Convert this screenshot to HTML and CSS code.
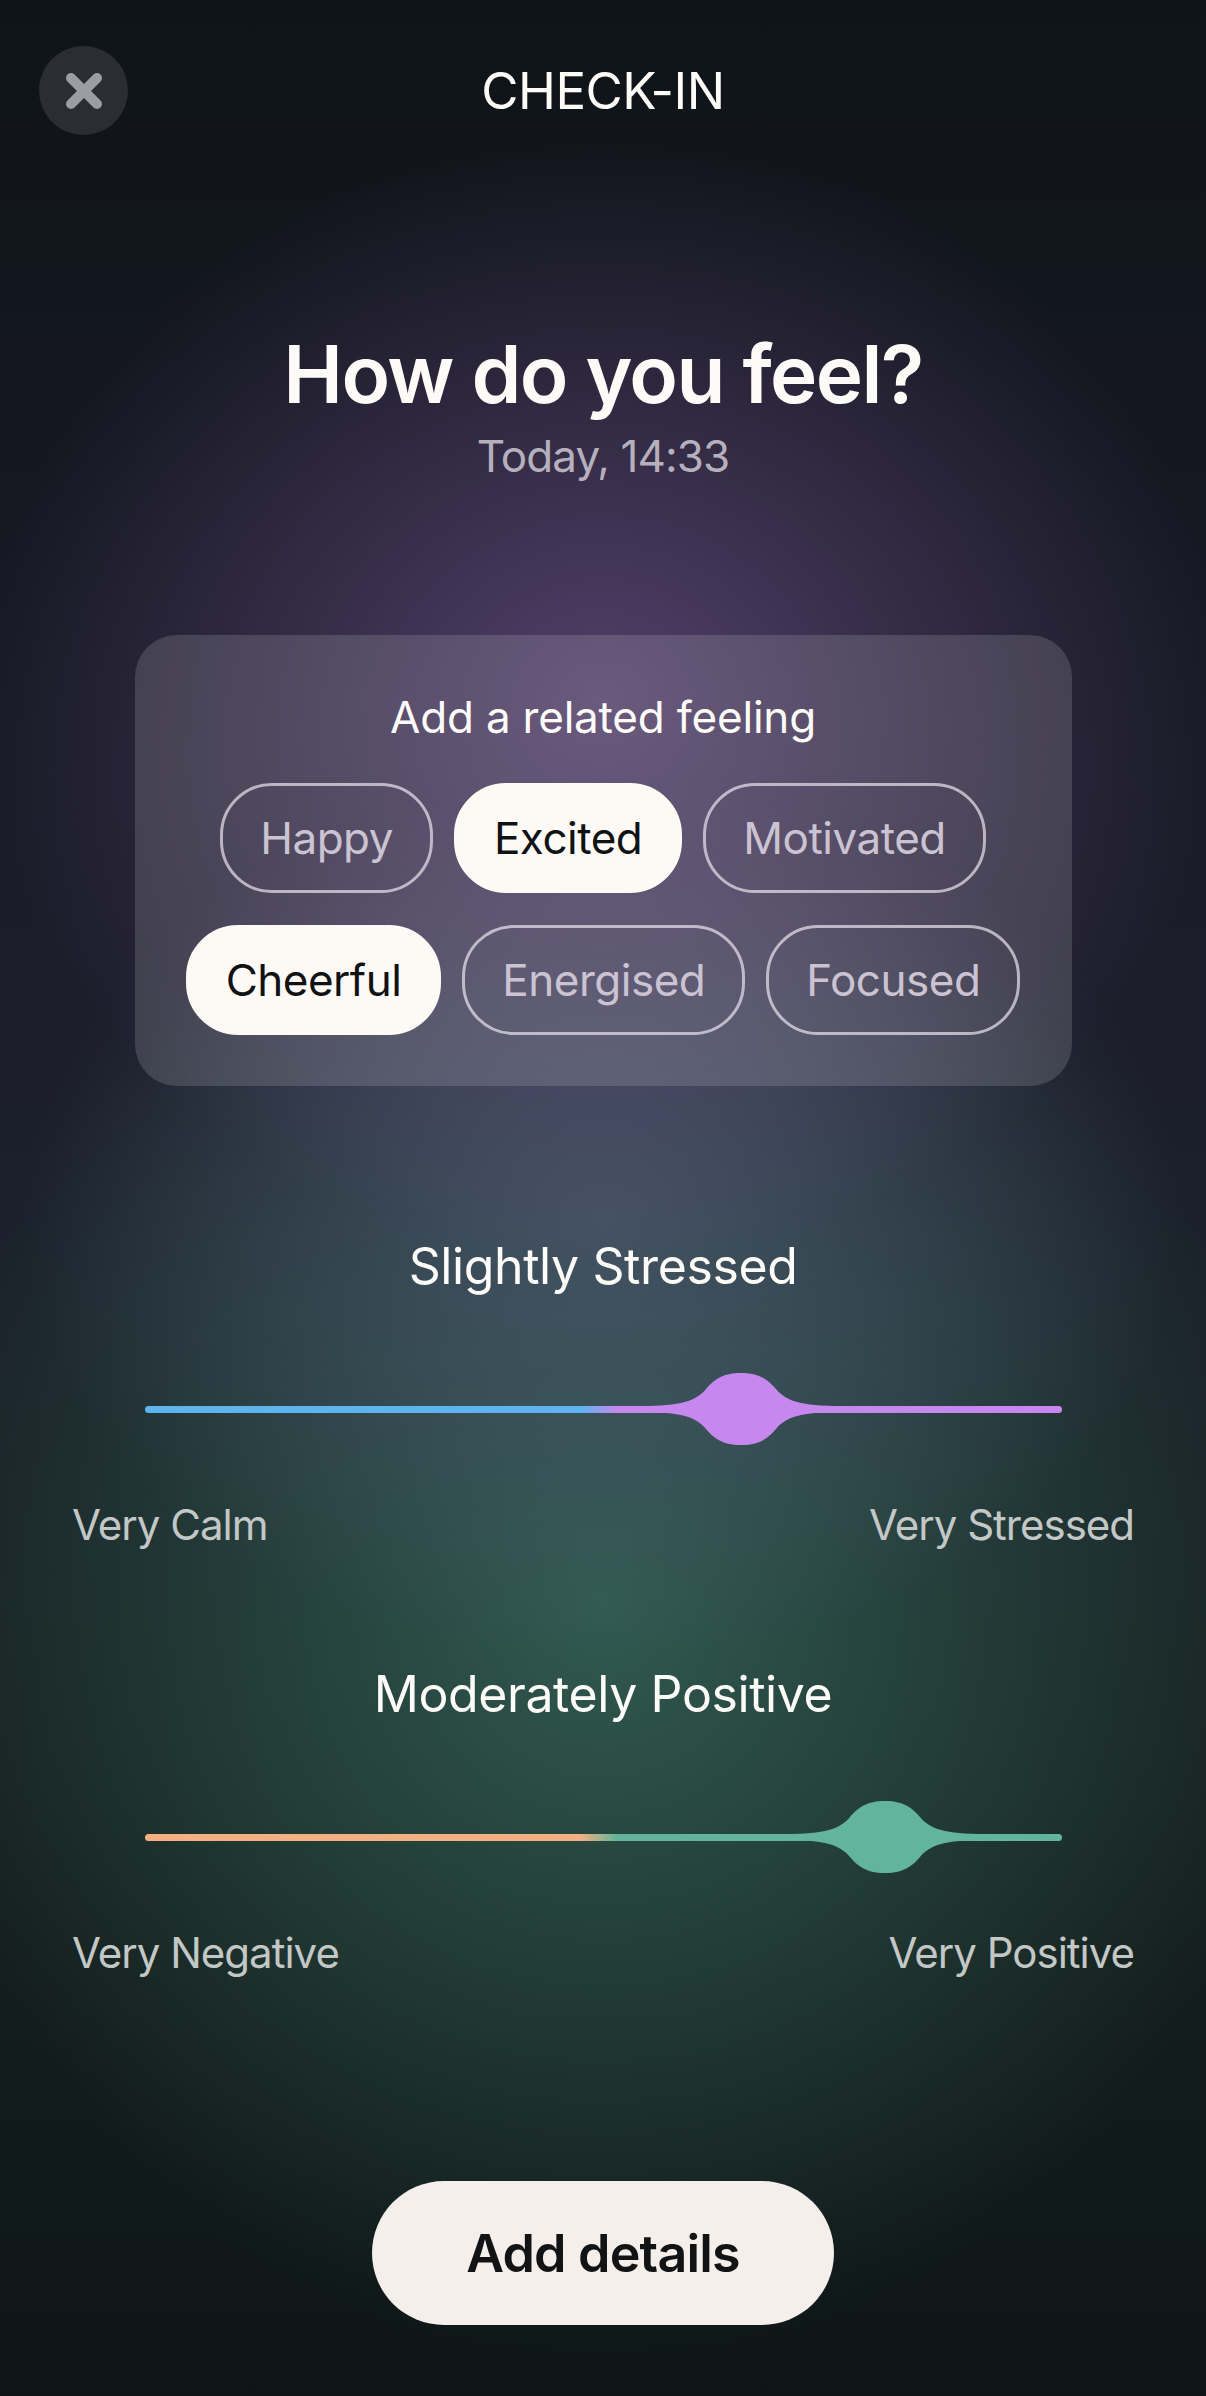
FILE: index.html
```html
<!DOCTYPE html>
<html lang="en">
<head>
<meta charset="utf-8">
<title>Check-in</title>
<link rel="stylesheet" href="styles.css">
</head>
<body>
<main class="screen">
  <header class="topbar">
    <button class="close" aria-label="Close">
      <svg width="36" height="36" viewBox="0 0 36 36"><path d="M5 5 L31 31 M31 5 L5 31" stroke="#9b9da4" stroke-width="10" stroke-linecap="round" fill="none"/></svg>
    </button>
    <div class="topbar-title">CHECK-IN</div>
    <div class="spacer"></div>
  </header>

  <h1 class="title">How do you feel?</h1>
  <p class="subtitle">Today, 14:33</p>

  <section class="card">
    <h2 class="card-title">Add a related feeling</h2>
    <div class="chips">
      <div class="chip-row">
        <span class="chip">Happy</span>
        <span class="chip chip-on">Excited</span>
        <span class="chip">Motivated</span>
      </div>
      <div class="chip-row">
        <span class="chip chip-on">Cheerful</span>
        <span class="chip">Energised</span>
        <span class="chip">Focused</span>
      </div>
    </div>
  </section>

  <section class="scale scale-first">
    <h3 class="scale-title">Slightly Stressed</h3>
    <div class="track-wrap">
      <div class="track track-stress"></div>
      <svg class="thumb" style="left: 65.1%" width="200" height="72" viewBox="0 0 200 72"><path fill="#c688ee" d="M0,33 C40,33 55,28 65,16 C72,8 80,0 100,0 C120,0 128,8 135,16 C145,28 160,33 200,33 L200,39 C160,39 145,44 135,56 C128,64 120,72 100,72 C80,72 72,64 65,56 C55,44 40,39 0,39 Z"/></svg>
    </div>
    <div class="scale-labels"><span>Very Calm</span><span>Very Stressed</span></div>
  </section>

  <section class="scale scale-second">
    <h3 class="scale-title">Moderately Positive</h3>
    <div class="track-wrap">
      <div class="track track-mood"></div>
      <svg class="thumb" style="left: 80.7%" width="200" height="72" viewBox="0 0 200 72"><path fill="#62b59a" d="M0,33 C40,33 55,28 65,16 C72,8 80,0 100,0 C120,0 128,8 135,16 C145,28 160,33 200,33 L200,39 C160,39 145,44 135,56 C128,64 120,72 100,72 C80,72 72,64 65,56 C55,44 40,39 0,39 Z"/></svg>
    </div>
    <div class="scale-labels"><span>Very Negative</span><span>Very Positive</span></div>
  </section>

  <button class="cta">Add details</button>
</main>
</body>
</html>
```
FILE: styles.css
```css
* { box-sizing: border-box; }

html, body {
  margin: 0;
  padding: 0;
}

body {
  width: 1206px;
  min-height: 2396px;
  font-family: "Inter", "Liberation Sans", sans-serif;
  color: #ffffff;
  background:
    radial-gradient(ellipse 620px 560px at 50% 700px, rgba(118, 86, 148, 0.62), rgba(118, 86, 148, 0) 100%),
    radial-gradient(ellipse 580px 440px at 50% 1220px, rgba(86, 94, 122, 0.6), rgba(86, 94, 122, 0) 100%),
    radial-gradient(ellipse 700px 760px at 50% 1600px, rgba(58, 112, 98, 0.72), rgba(58, 112, 98, 0) 100%),
    linear-gradient(180deg, #0f1418 0%, #141720 18%, #1c1d2b 40%, #1a2129 55%, #16211f 75%, #0e1517 100%);
}

.screen {
  display: flex;
  flex-direction: column;
  align-items: center;
  min-height: 2396px;
}

/* Top bar */
.topbar {
  width: 100%;
  padding: 46px 39px 0;
  display: grid;
  grid-template-columns: 1fr auto 1fr;
  align-items: center;
  height: 135px;
}

.close {
  width: 89px;
  height: 89px;
  border-radius: 50%;
  border: none;
  background: #2a2d34;
  display: flex;
  align-items: center;
  justify-content: center;
  padding: 0;
  justify-self: start;
}

.topbar-title {
  font-size: 51px;
  font-weight: 400;
  letter-spacing: -0.5px;
  line-height: 60px;
  color: #fdfbf8;
}

/* Heading */
.title {
  margin: 191px 0 0;
  font-size: 80px;
  line-height: 96px;
  font-weight: 600;
  letter-spacing: -1.6px;
  color: #fdfbf8;
}

.subtitle {
  margin: 8px 0 0;
  font-size: 44px;
  line-height: 53px;
  color: #b6b0bd;
  letter-spacing: -0.9px;
}

/* Related feelings card */
.card {
  margin-top: 152px;
  width: 937px;
  padding: 57px 0 51px;
  border-radius: 42px;
  background: rgba(255, 255, 255, 0.14);
  display: flex;
  flex-direction: column;
  align-items: center;
}

.card-title {
  margin: 0;
  font-size: 44px;
  line-height: 50px;
  font-weight: 400;
  color: #fdfbf8;
  letter-spacing: -0.2px;
}

.chips {
  margin-top: 41px;
  display: flex;
  flex-direction: column;
  gap: 32px;
}

.chip-row {
  display: flex;
  justify-content: center;
  gap: 21px;
}

.chip {
  height: 110px;
  padding: 0 37px;
  border: 3px solid rgba(232, 224, 236, 0.72);
  border-radius: 52px;
  display: flex;
  align-items: center;
  font-size: 44px;
  color: #cbc3d1;
  letter-spacing: -0.5px;
}

.chip-on {
  background: #fdfaf6;
  border-color: #fdfaf6;
  color: #101214;
}

/* Scales */
.scale {
  width: 100%;
  padding: 0 72px;
  display: flex;
  flex-direction: column;
  align-items: center;
}

.scale-first { margin-top: 150px; }
.scale-second { margin-top: 114px; }

.scale-title {
  margin: 0;
  font-size: 50px;
  line-height: 60px;
  font-weight: 400;
  color: #fdfbf8;
  letter-spacing: -0.4px;
}

.track-wrap {
  position: relative;
  margin-top: 77px;
  width: 917px;
  height: 72px;
  display: flex;
  align-items: center;
}

.track {
  width: 100%;
  height: 7px;
  border-radius: 4px;
}

.track-stress {
  background: linear-gradient(90deg, #5db4ef 0%, #5db4ef 47.5%, #c688ee 51.5%, #c688ee 100%);
}

.track-mood {
  background: linear-gradient(90deg, #f2b083 0%, #f2b083 47.5%, #62b59a 51.5%, #62b59a 100%);
}

.thumb {
  position: absolute;
  top: 0;
  margin-left: -100px;
}

.scale-labels {
  margin-top: 55px;
  width: 100%;
  display: flex;
  justify-content: space-between;
  font-size: 42px;
  line-height: 50px;
  color: #c3c7c5;
  letter-spacing: -1px;
}

/* CTA */
.cta {
  margin-top: 203px;
  width: 462px;
  height: 144px;
  border: none;
  border-radius: 72px;
  background: #f4efeb;
  color: #121314;
  font-family: "Inter", "Liberation Sans", sans-serif;
  font-size: 52px;
  font-weight: 600;
  letter-spacing: -0.8px;
}
```
